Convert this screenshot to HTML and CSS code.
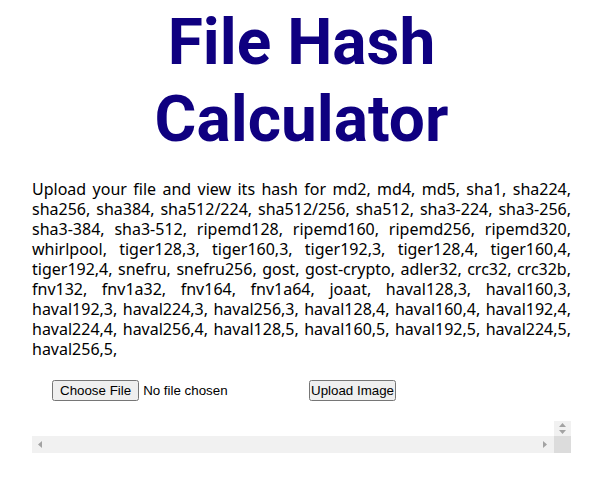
FILE: index.html
```html
<!DOCTYPE html>
<html lang="en">
<head>
<meta charset="utf-8">
<title>File Hash Calculator</title>
<link rel="stylesheet" href="styles.css">
</head>
<body>
<div class="page">
  <h1 class="title">File Hash Calculator</h1>
  <p class="intro">Upload your file and view its hash for md2, md4, md5, sha1, sha224, sha256, sha384, sha512/224, sha512/256, sha512, sha3-224, sha3-256, sha3-384, sha3-512, ripemd128, ripemd160, ripemd256, ripemd320, whirlpool, tiger128,3, tiger160,3, tiger192,3, tiger128,4, tiger160,4, tiger192,4, snefru, snefru256, gost, gost-crypto, adler32, crc32, crc32b, fnv132, fnv1a32, fnv164, fnv1a64, joaat, haval128,3, haval160,3, haval192,3, haval224,3, haval256,3, haval128,4, haval160,4, haval192,4, haval224,4, haval256,4, haval128,5, haval160,5, haval192,5, haval224,5, haval256,5,</p>
  <form class="upload-form">
    <input class="file-input" type="file" name="file">
    <button class="upload-btn" type="button">Upload Image</button>
  </form>
  <div class="result-box">
    <textarea class="result" wrap="off" rows="1"></textarea>
    <div class="vbar">
      <svg class="arrow" width="7" height="4" viewBox="0 0 7 4"><path d="M0 4H7L3.5 0Z" fill="#a3a3a3"/></svg>
      <svg class="arrow" width="7" height="4" viewBox="0 0 7 4"><path d="M0 0H7L3.5 4Z" fill="#a3a3a3"/></svg>
    </div>
    <div class="hbar">
      <svg class="arrow" width="4" height="7" viewBox="0 0 4 7"><path d="M4 0V7L0 3.5Z" fill="#a3a3a3"/></svg>
      <svg class="arrow" width="4" height="7" viewBox="0 0 4 7"><path d="M0 0V7L4 3.5Z" fill="#a3a3a3"/></svg>
    </div>
    <div class="corner"></div>
  </div>
</div>
</body>
</html>
```

FILE: styles.css
```css
html, body {
  margin: 0;
  padding: 0;
  background: #ffffff;
}

.page {
  padding: 5px 31px 0 32px;
}

.title {
  margin: 0;
  font-family: Roboto, "Liberation Sans", sans-serif;
  font-weight: 700;
  font-size: 64px;
  line-height: 1.2;
  color: #0f0080;
  text-align: center;
}

.intro {
  margin: 20px 0 0;
  font-family: "Noto Sans", "Open Sans", sans-serif;
  font-size: 16px;
  line-height: 20px;
  color: #000000;
  text-align: justify;
}

.upload-form {
  display: flex;
  align-items: center;
  gap: 4px;
  margin: 21px 0 0;
  padding-left: 20px;
}

.file-input {
  font-family: "Liberation Sans", Arial, sans-serif;
  font-size: 13.33px;
}

.upload-btn {
  font-family: "Liberation Sans", Arial, sans-serif;
  font-size: 13.33px;
  padding: 1px 0;
}

.result-box {
  display: grid;
  grid-template-columns: 1fr 17px;
  grid-template-rows: 15px 17px;
  width: 539px;
  margin-top: 20px;
}

.result {
  display: block;
  box-sizing: border-box;
  width: 100%;
  height: 15px;
  margin: 0;
  padding: 0;
  border: none;
  outline: none;
  overflow: hidden;
  resize: none;
  background: #ffffff;
}

.vbar {
  background: #f1f1f1;
  display: flex;
  flex-direction: column;
  align-items: center;
  justify-content: center;
  gap: 3px;
}

.hbar {
  background: #f1f1f1;
  display: flex;
  align-items: center;
  justify-content: space-between;
  padding: 0 7px 0 6px;
}

.arrow {
  display: block;
}

.corner {
  background: #dcdcdc;
}
```
